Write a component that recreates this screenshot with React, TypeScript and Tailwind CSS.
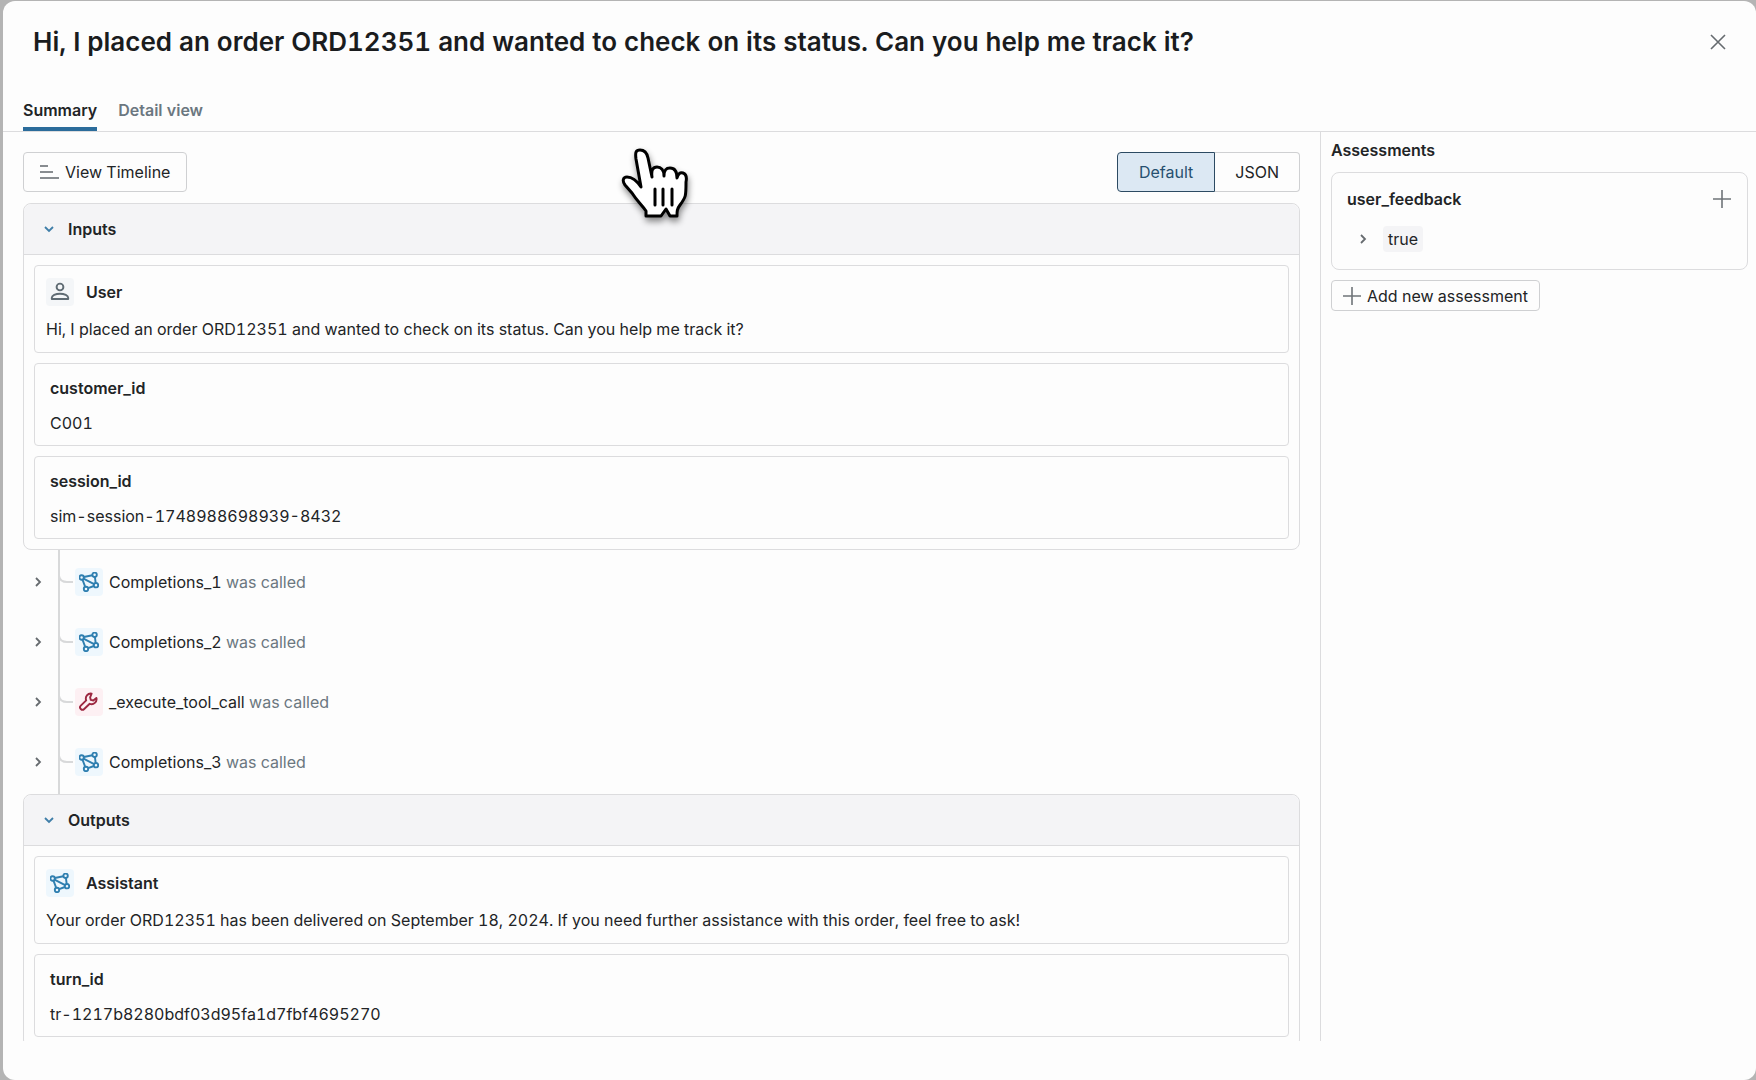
import React, { useState } from 'react';

interface Field {
  name: string;
  value: string;
}

interface Call {
  name: string;
  type: 'llm' | 'tool';
}

const inputs: Field[] = [
  { name: 'customer_id', value: 'C001' },
  { name: 'session_id', value: 'sim-session-1748988698939-8432' },
];

const outputs: Field[] = [{ name: 'turn_id', value: 'tr-1217b8280bdf03d95fa1d7fbf4695270' }];

const calls: Call[] = [
  { name: 'Completions_1', type: 'llm' },
  { name: 'Completions_2', type: 'llm' },
  { name: '_execute_tool_call', type: 'tool' },
  { name: 'Completions_3', type: 'llm' },
];

const ModelIcon = () => (
  <svg width="20" height="20" viewBox="0 0 20 20" fill="none" stroke="#2f7fb0" strokeWidth="1.9">
    <circle cx="2.600" cy="5.500" r="2.200" />
    <circle cx="15.600" cy="2.800" r="2.200" />
    <circle cx="17" cy="13.200" r="2.200" />
    <circle cx="7" cy="17" r="2.200" />
    <path d="M4.800 5l8.600-1.700M15.900 5l.8 6M14.900 14l-5.800 2.200M3.500 7.600l2.700 7.300M4.500 6.600l10.600 5.500" />
  </svg>
);

const WrenchIcon = () => (
  <svg width="20" height="20" viewBox="0 0 20 20" fill="none" stroke="#9c2740" strokeWidth="1.9" strokeLinejoin="round">
    <path d="M12.6 1.6a5 5 0 0 0-5.4 6.8L1.8 13.600a2.300 2.300 0 0 0 3.400 3.400l5.500-5.200a5 5 0 0 0 6.700-5.900l-3.100 2.600-2.500-.6-.7-2.600z" />
  </svg>
);

const UserIcon = () => (
  <svg width="20" height="20" viewBox="0 0 20 20" fill="none" stroke="#5f6b73" strokeWidth="1.9">
    <circle cx="10" cy="5" r="3.400" />
    <path d="M1.800 17v-1.300c0-2 3.700-4 8.200-4s8.200 2 8.200 4v1.300z" strokeLinejoin="round" />
  </svg>
);

const PlusIcon = () => (
  <svg width="18" height="18" viewBox="0 0 18 18" stroke="#6f7478" strokeWidth="1.6">
    <path d="M9 0v18M0 9h18" />
  </svg>
);

const Chevron: React.FC<{ open?: boolean }> = ({ open }) => (
  <svg
    width="10"
    height="10"
    viewBox="0 0 10 10"
    fill="none"
    strokeWidth="1.8"
    className={open ? 'stroke-[#3f7ea8]' : 'stroke-[#666b6f]'}
  >
    <path d={open ? 'M1 3l4 4 4-4' : 'M3 1l4 4-4 4'} />
  </svg>
);

const FieldCard: React.FC<{ field: Field }> = ({ field }) => (
  <div className="rounded-sm border border-[#dcdcde] px-[15px] pt-3 pb-2">
    <h3 className="font-semibold leading-6">{field.name}</h3>
    <p className="mt-[9px] leading-7">{field.value}</p>
  </div>
);

interface MessageCardProps {
  role: string;
  text: string;
  icon: React.ReactNode;
  iconClass: string;
}

const MessageCard: React.FC<MessageCardProps> = ({ role, text, icon, iconClass }) => (
  <div className="rounded-sm border border-[#dcdcde] px-[11px] pt-3 pb-2">
    <div className="flex items-center gap-3">
      <span className={`flex size-7 items-center justify-center rounded-sm ${iconClass}`}>{icon}</span>
      <h3 className="font-semibold">{role}</h3>
    </div>
    <p className="mt-2 leading-[30px]">{text}</p>
  </div>
);

interface SectionProps {
  title: string;
  children: React.ReactNode;
}

const Section: React.FC<SectionProps> = ({ title, children }) => (
  <section className="rounded-lg border border-[#dcdcde]">
    <h2 className="rounded-t-lg border-b border-[#dcdcde] bg-[#f4f4f6]">
      <button type="button" className="flex h-[50px] w-full items-center gap-[14px] px-5 font-semibold">
        <Chevron open />
        {title}
      </button>
    </h2>
    <div className="flex flex-col gap-[10px] p-[10px]">{children}</div>
  </section>
);

const HandPointer = () => (
  <svg
    className="pointer-events-none absolute top-[147px] left-[619px] drop-shadow-[1px_4px_3px_rgba(0,0,0,0.45)]"
    width="72"
    height="74"
    viewBox="0 0 72 74"
    fill="#fff"
    stroke="#000"
    strokeWidth="3"
    strokeLinejoin="round"
    strokeLinecap="round"
  >
    <path d="M22 40L17 12C16 5 17 3 21 3C26 3 28 6 29 11L33 30C32 23 34 20 38 20C42 20 45 23 45 29C45 23 47 21 51 21C55 21 58 24 58 31C59 27 61 25 64 26C67 27 68 30 67 35C67 49 67 50 61 58C58 62 58 64 58 69H51L47 62L42 69H27V64C23 58 18 54 13 46L6 38C3 34 4 30 8 30C14 30 18 34 22 40Z" />
    <path d="M36 42v16M44 42v16M53 42v16" />
  </svg>
);

const App: React.FC = () => {
  const [tab, setTab] = useState('summary');
  const [mode, setMode] = useState('default');

  return (
    <div className="relative flex h-screen overflow-hidden bg-[#b4b4b4] pt-px pl-[3px] font-['Inter','Liberation_Sans',sans-serif] text-base text-[#222426] tabular-nums">
      <div role="dialog" className="flex min-w-0 flex-1 flex-col rounded-xl bg-[#fdfdfd] pb-[39px]">
        <header className="flex items-center justify-between px-[30px] pt-[17px]">
          <h1 className="text-[26px] leading-[48px] font-semibold text-[#1a1c1e]">
            Hi, I placed an order ORD12351 and wanted to check on its status. Can you help me track it?
          </h1>
          <button type="button" aria-label="Close">
            <svg width="16" height="16" viewBox="0 0 16 16" stroke="#666b6f" strokeWidth="1.6">
              <path d="M1 1l14 14M15 1L1 15" />
            </svg>
          </button>
        </header>

        <nav className="mt-[25px] flex gap-[21px] border-b border-[#dcdcde] px-5 font-semibold">
          <button
            type="button"
            onClick={() => setTab('summary')}
            className={tab === 'summary' ? 'h-10 border-b-4 border-[#2b6c9b] pt-px' : 'h-10 border-b-4 border-transparent pt-px text-[#6b7780]'}
          >
            Summary
          </button>
          <button
            type="button"
            onClick={() => setTab('detail')}
            className={tab === 'detail' ? 'h-10 border-b-4 border-[#2b6c9b] pt-px' : 'h-10 border-b-4 border-transparent pt-px text-[#6b7780]'}
          >
            Detail view
          </button>
        </nav>

        <div className="flex min-h-0 flex-1">
          <main className="min-w-0 flex-1 overflow-hidden px-5 pt-5">
            <div className="mb-[11px] flex justify-between">
              <button type="button" className="flex h-10 items-center gap-[6px] rounded-sm border border-[#cfd0d2] px-4">
                <svg width="19" height="14" viewBox="0 0 19 14" stroke="#888c90" strokeWidth="2">
                  <path d="M0 1h8M0 7h13M0 13h19" />
                </svg>
                View Timeline
              </button>
              <div className="flex">
                <button
                  type="button"
                  onClick={() => setMode('default')}
                  className={
                    mode === 'default'
                      ? 'h-10 rounded-l-sm border border-[#2c4a62] bg-[#dce8f3] px-[21px] text-[#27506f]'
                      : 'h-10 rounded-l-sm border border-[#cfd0d2] px-[21px]'
                  }
                >
                  Default
                </button>
                <button
                  type="button"
                  onClick={() => setMode('json')}
                  className={
                    mode === 'json'
                      ? 'h-10 rounded-r-sm border border-[#2c4a62] bg-[#dce8f3] px-5 text-[#27506f]'
                      : 'h-10 rounded-r-sm border border-l-0 border-[#cfd0d2] px-5'
                  }
                >
                  JSON
                </button>
              </div>
            </div>

            <Section title="Inputs">
              <MessageCard
                role="User"
                text="Hi, I placed an order ORD12351 and wanted to check on its status. Can you help me track it?"
                icon={<UserIcon />}
                iconClass="bg-[#f4f6f8]"
              />
              {inputs.map((field) => (
                <FieldCard key={field.name} field={field} />
              ))}
            </Section>

            <ul className="py-0.5 pl-2">
              {calls.map((call) => (
                <li key={call.name} className="flex h-[60px] items-center">
                  <button type="button" aria-label={`Expand ${call.name}`} className="flex w-[27px] pl-[2px]">
                    <Chevron />
                  </button>
                  <svg
                    className="overflow-visible"
                    width="17"
                    height="60"
                    viewBox="0 0 17 60"
                    fill="none"
                    stroke="#d8d9da"
                    strokeWidth="2"
                  >
                    <path d="M1 -2v64M1 24q1 6 8 6h6" />
                  </svg>
                  <span
                    className={
                      call.type === 'llm'
                        ? 'flex size-7 items-center justify-center rounded-sm bg-[#eef7fd]'
                        : 'flex size-7 items-center justify-center rounded-sm bg-[#fdf0f3]'
                    }
                  >
                    {call.type === 'llm' ? <ModelIcon /> : <WrenchIcon />}
                  </span>
                  <span className="ml-[6px]">
                    {call.name} <span className="text-[#6b7780]">was called</span>
                  </span>
                </li>
              ))}
            </ul>

            <Section title="Outputs">
              <MessageCard
                role="Assistant"
                text="Your order ORD12351 has been delivered on September 18, 2024. If you need further assistance with this order, feel free to ask!"
                icon={<ModelIcon />}
                iconClass="bg-[#eef7fd]"
              />
              {outputs.map((field) => (
                <FieldCard key={field.name} field={field} />
              ))}
            </Section>
          </main>

          <aside className="w-[436px] shrink-0 border-l border-[#dcdcde] pt-[6px] pr-2 pl-[10px]">
            <h2 className="leading-6 font-semibold">Assessments</h2>
            <div className="mt-[10px] h-[98px] rounded-lg border border-[#dcdcde] pt-[14px] pr-4 pl-[15px]">
              <div className="flex items-center justify-between">
                <h3 className="font-semibold">user_feedback</h3>
                <button type="button" aria-label="Add user_feedback">
                  <PlusIcon />
                </button>
              </div>
              <div className="mt-[15px] flex items-center gap-[15px] pl-[11px]">
                <button type="button" aria-label="Expand feedback">
                  <Chevron />
                </button>
                <span className="rounded-sm bg-[#f4f4f6] px-[5px] leading-[26px]">true</span>
              </div>
            </div>
            <button type="button" className="mt-[10px] flex h-[31px] items-center gap-[6px] rounded-sm border border-[#cfd0d2] px-[11px]">
              <PlusIcon />
              Add new assessment
            </button>
          </aside>
        </div>
      </div>
      <HandPointer />
    </div>
  );
};

export default App;
